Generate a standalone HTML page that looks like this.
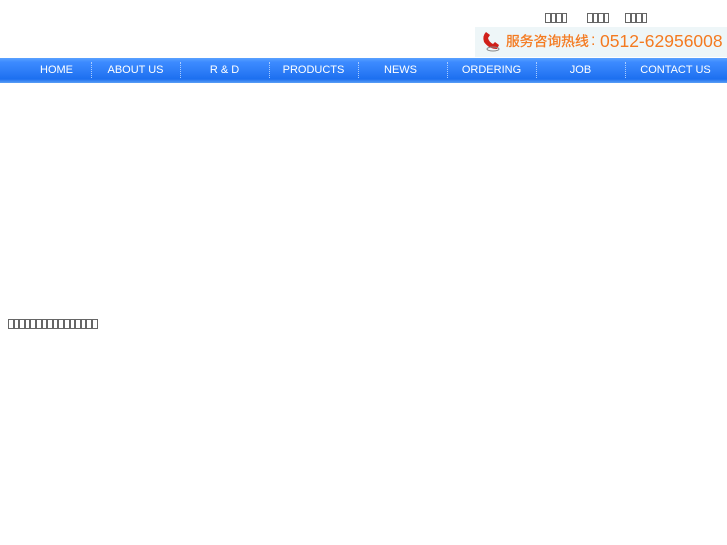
<!DOCTYPE html>
<html><head><meta charset="utf-8"><style>
body{margin:0;width:727px;height:545px;background:#fff;position:relative;overflow:hidden;font-family:"Liberation Sans",sans-serif}
.t{position:absolute;display:flex}
.t i{display:block;width:3.6px;height:8px;border:1px solid #666;box-sizing:content-box}
.nav{position:absolute;left:0;top:58px;width:727px;height:25px;background:linear-gradient(#5aa2ff 0,#3d8bff 4px,#2f7ff8 12px,#1c6ff0 21px,#5b9ff5 25px);}
.nav span{position:absolute;top:6px;color:#fff;font-size:11px;text-align:center;width:89px}
.sep{position:absolute;top:4px;width:0;height:16px;border-left:1px dotted #a9ccff}
</style></head><body>
<div class="t" style="left:545px;top:13px"><i></i><i></i><i></i><i></i></div>
<div class="t" style="left:587px;top:13px"><i></i><i></i><i></i><i></i></div>
<div class="t" style="left:625px;top:13px"><i></i><i></i><i></i><i></i></div>
<div style="position:absolute;left:475px;top:27px;width:252px;height:30px;background:#eef6f8"></div>
<svg style="position:absolute;left:480px;top:30px" width="22" height="22" viewBox="0 0 22 22"><path d="M6 2 L10 5 L8 8 Q9 12 13 14 L15 12 L19 15 L17 19 Q9 19 4 12 Q2 6 6 2Z" fill="#d0201a"/><ellipse cx="13" cy="19" rx="6" ry="2" fill="none" stroke="#888"/></svg>
<div style="position:absolute;left:506px;top:34px;font-size:13.8px;color:#f47a20;font-family:'Liberation Sans','Noto Sans CJK SC',sans-serif;white-space:nowrap;line-height:16px;-webkit-text-stroke:0.3px #f47a20">服务咨询热线</div>
<div style="position:absolute;left:591px;top:32px;font-size:16px;color:#f47a20;line-height:18px">:</div>
<div style="position:absolute;left:600px;top:32px;font-size:17.5px;color:#f47a20;white-space:nowrap;line-height:18px">0512-62956008</div>
<div class="nav">
<span style="left:12px">HOME</span><span style="left:91px">ABOUT US</span><span style="left:180px">R &amp; D</span><span style="left:269px">PRODUCTS</span><span style="left:356px">NEWS</span><span style="left:447px">ORDERING</span><span style="left:536px">JOB</span><span style="left:631px">CONTACT US</span>
<div class="sep" style="left:91px"></div><div class="sep" style="left:180px"></div><div class="sep" style="left:269px"></div><div class="sep" style="left:358px"></div><div class="sep" style="left:447px"></div><div class="sep" style="left:536px"></div><div class="sep" style="left:625px"></div>
</div>
<div class="t" style="left:8px;top:319px"><i></i><i></i><i></i><i></i><i></i><i></i><i></i><i></i><i></i><i></i><i></i><i></i><i></i><i></i><i></i><i></i></div>
</body></html>
